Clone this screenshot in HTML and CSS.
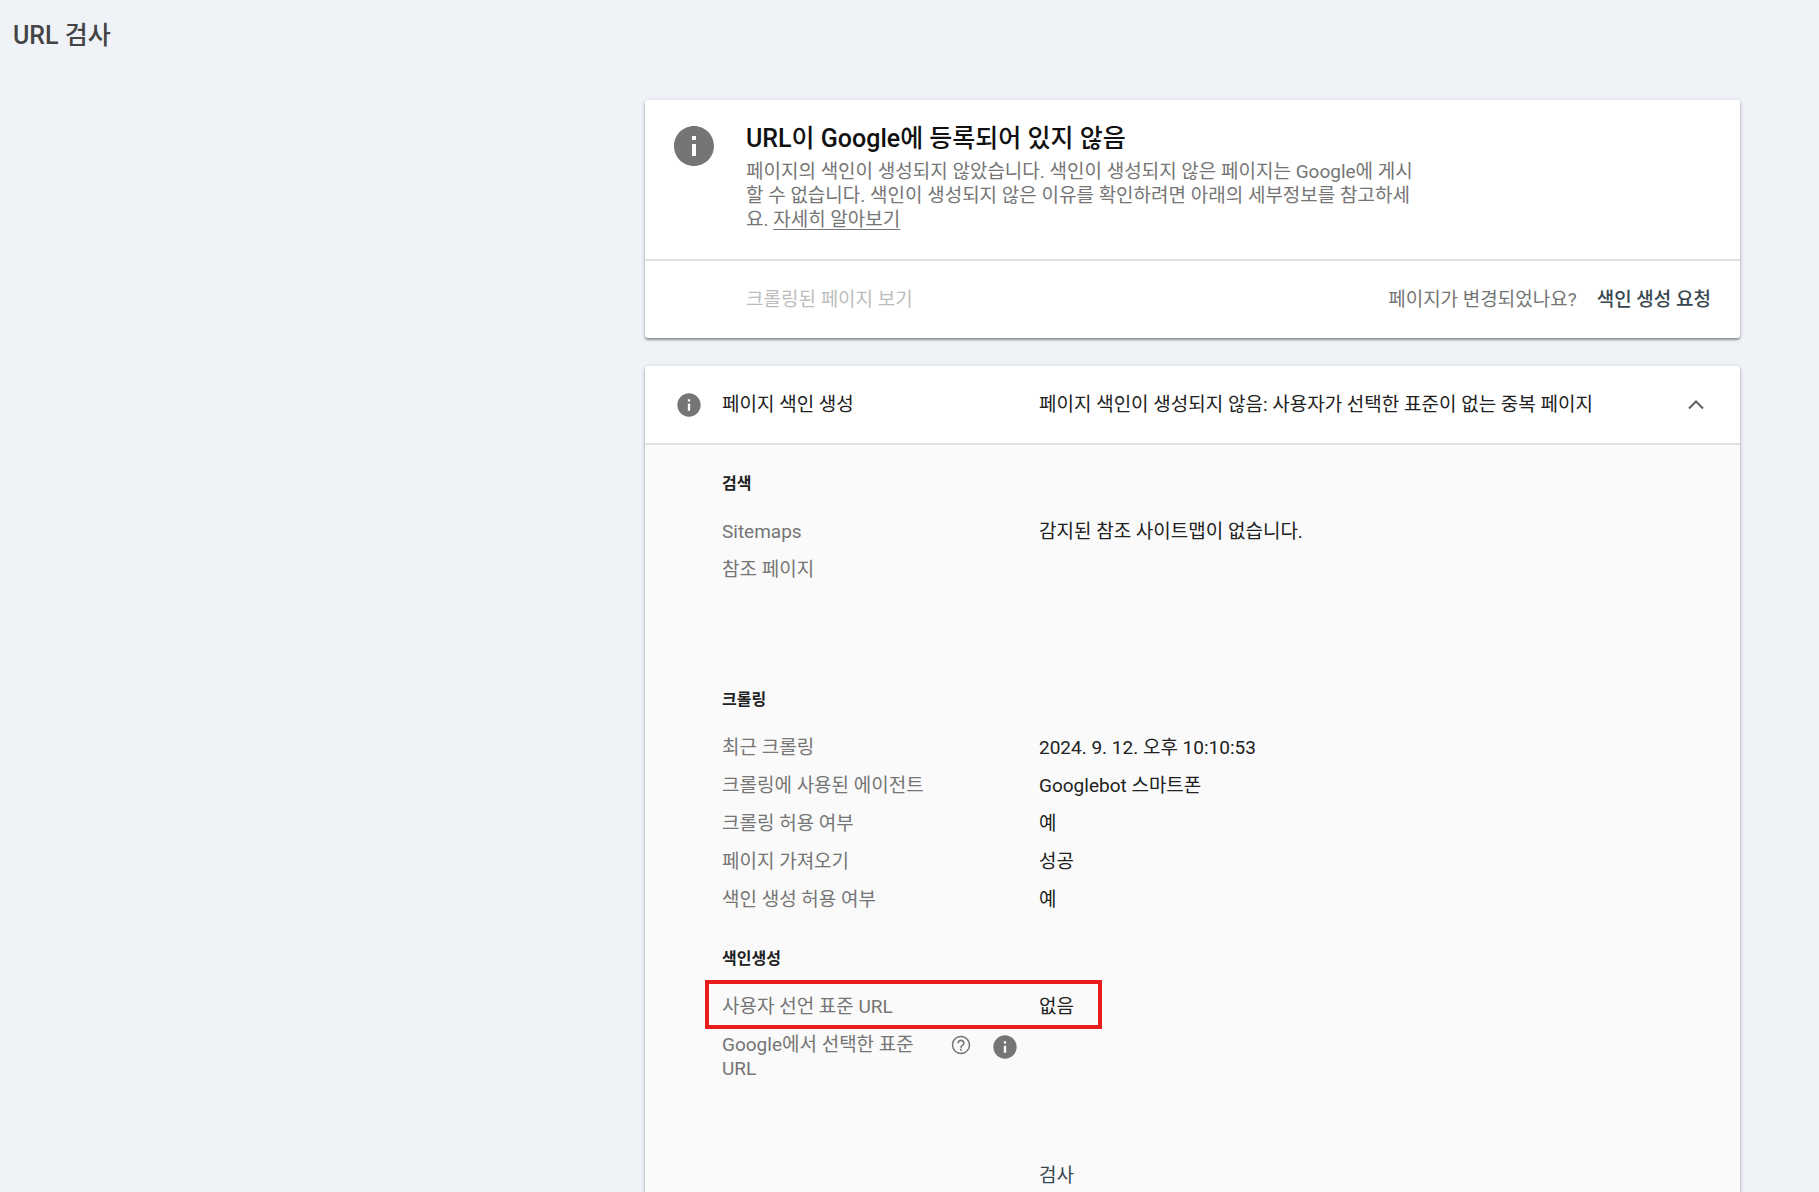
FILE: index.html
```html
<!DOCTYPE html>
<html lang="ko">
<head>
    <meta charset="UTF-8">
    <meta name="viewport" content="width=device-width, initial-scale=1.0">
    <title>URL 검사</title>
    <link rel="stylesheet" href="styles.css">
</head>
<body>
    <header class="page-header">
        <h1>URL 검사</h1>
    </header>

    <main class="content">
        <section class="card">
            <div class="summary">
                <svg class="icon-large" viewBox="0 0 24 24" aria-hidden="true">
                    <path d="M12 2C6.48 2 2 6.48 2 12s4.48 10 10 10 10-4.48 10-10S17.52 2 12 2zm1 15h-2v-6h2v6zm0-8h-2V7h2v2z"/>
                </svg>
                <div class="summary-text">
                    <h2>URL이 Google에 등록되어 있지 않음</h2>
                    <p>페이지의 색인이 생성되지 않았습니다. 색인이 생성되지 않은 페이지는 Google에 게시할 수 없습니다. 색인이 생성되지 않은 이유를 확인하려면 아래의 세부정보를 참고하세요. <a href="#">자세히 알아보기</a></p>
                </div>
            </div>
            <div class="actions">
                <button type="button" class="view-page" disabled>크롤링된 페이지 보기</button>
                <span class="changed">페이지가 변경되었나요?</span>
                <button type="button" class="request">색인 생성 요청</button>
            </div>
        </section>

        <section class="card details">
            <button type="button" class="details-header" aria-expanded="true">
                <svg class="icon-info" viewBox="0 0 24 24" aria-hidden="true">
                    <path d="M12 2C6.48 2 2 6.48 2 12s4.48 10 10 10 10-4.48 10-10S17.52 2 12 2zm1 15h-2v-6h2v6zm0-8h-2V7h2v2z"/>
                </svg>
                <span class="details-name">페이지 색인 생성</span>
                <span class="details-status">페이지 색인이 생성되지 않음: 사용자가 선택한 표준이 없는 중복 페이지</span>
                <svg class="chevron" viewBox="0 0 24 24" aria-hidden="true">
                    <path d="M5 15.5l7-7 7 7"/>
                </svg>
            </button>

            <div class="details-body">
                <div class="group group-search">
                    <h3>검색</h3>
                    <dl>
                        <div class="row">
                            <dt>Sitemaps</dt>
                            <dd>감지된 참조 사이트맵이 없습니다.</dd>
                        </div>
                        <div class="row">
                            <dt>참조 페이지</dt>
                            <dd></dd>
                        </div>
                    </dl>
                </div>

                <div class="group">
                    <h3>크롤링</h3>
                    <dl>
                        <div class="row">
                            <dt>최근 크롤링</dt>
                            <dd>2024. 9. 12. 오후 10:10:53</dd>
                        </div>
                        <div class="row">
                            <dt>크롤링에 사용된 에이전트</dt>
                            <dd>Googlebot 스마트폰</dd>
                        </div>
                        <div class="row">
                            <dt>크롤링 허용 여부</dt>
                            <dd>예</dd>
                        </div>
                        <div class="row">
                            <dt>페이지 가져오기</dt>
                            <dd>성공</dd>
                        </div>
                        <div class="row">
                            <dt>색인 생성 허용 여부</dt>
                            <dd>예</dd>
                        </div>
                    </dl>
                </div>

                <div class="group">
                    <h3>색인생성</h3>
                    <dl>
                        <div class="row highlighted">
                            <dt>사용자 선언 표준 URL</dt>
                            <dd>없음</dd>
                        </div>
                        <div class="row">
                            <dt>
                                <span class="label-text">Google에서 선택한 표준 URL</span>
                                <svg class="icon-help" viewBox="0 0 24 24" aria-hidden="true">
                                    <path d="M11 18h2v-2h-2v2zm1-16C6.48 2 2 6.48 2 12s4.48 10 10 10 10-4.48 10-10S17.52 2 12 2zm0 18.4c-4.63 0-8.4-3.77-8.4-8.4s3.77-8.4 8.4-8.4 8.4 3.77 8.4 8.4-3.77 8.4-8.4 8.4zM12 6c-2.21 0-4 1.79-4 4h1.8c0-1.2 1-2.2 2.2-2.2s2.2 1 2.2 2.2c0 2-3.1 1.8-3.1 5h1.8c0-2.3 3.1-2.5 3.1-5 0-2.21-1.79-4-4-4z"/>
                                </svg>
                                <svg class="icon-info" viewBox="0 0 24 24" aria-hidden="true">
                                    <path d="M12 2C6.48 2 2 6.48 2 12s4.48 10 10 10 10-4.48 10-10S17.52 2 12 2zm1 15h-2v-6h2v6zm0-8h-2V7h2v2z"/>
                                </svg>
                            </dt>
                            <dd></dd>
                        </div>
                    </dl>
                    <div class="inspect-row">
                        <button type="button" class="inspect">검사</button>
                    </div>
                </div>
            </div>
        </section>
    </main>
</body>
</html>
```
FILE: styles.css
```css
* {
    box-sizing: border-box;
}

body {
    display: flex;
    flex-direction: column;
    min-height: 100vh;
    margin: 0;
    background: #eff3f8;
    color: #212121;
    font-family: Roboto, "Noto Sans CJK KR", sans-serif;
    font-size: 19px;
    line-height: 24px;
}

h1, h2, h3, p, dl, dd {
    margin: 0;
}

button {
    padding: 0;
    border: 0;
    background: none;
    color: inherit;
    font: inherit;
    text-align: left;
    cursor: pointer;
}

svg {
    flex: none;
    fill: #757575;
}

.page-header {
    padding: 20px 13px 16px;
}

.page-header h1 {
    color: #444;
    font-size: 25px;
    font-weight: 500;
    line-height: 32px;
}

.content {
    display: flex;
    flex: 1;
    flex-direction: column;
    gap: 28px;
    margin: 32px 79px 0 645px;
}

.card {
    background: #fff;
    border-radius: 3px;
    box-shadow: 0 1px 4px rgba(0, 0, 0, 0.2), 0 2px 2px rgba(0, 0, 0, 0.3);
}

.summary {
    display: flex;
    gap: 28px;
    padding: 22px 25px 27px;
    border-bottom: 2px solid #e0e0e0;
}

.icon-large {
    width: 48px;
    height: 48px;
}

.summary-text h2 {
    color: #111;
    font-size: 25px;
    font-weight: 500;
    line-height: 34px;
}

.summary-text p {
    max-width: 680px;
    margin-top: 4px;
    color: #757575;
}

.summary-text a {
    color: inherit;
    text-underline-offset: 3px;
}

.actions {
    display: flex;
    align-items: center;
    padding: 27px 29px 26px 101px;
}

.view-page {
    margin-right: auto;
    color: #bdbdbd;
    cursor: default;
}

.changed {
    margin-right: 20px;
    color: #757575;
}

.request {
    color: #37474f;
    font-weight: 500;
}

.details {
    display: flex;
    flex: 1;
    flex-direction: column;
    border-radius: 3px 3px 0 0;
}

.details-header {
    display: flex;
    align-items: center;
    width: 100%;
    padding: 25px 32px 24px 30px;
    border-bottom: 2px solid #e0e0e0;
}

.details-header .icon-info {
    margin-right: 19px;
}

.details-name {
    width: 317px;
}

.details-status {
    flex: 1;
}

.icon-info {
    width: 28px;
    height: 28px;
}

.chevron {
    width: 24px;
    height: 24px;
    fill: none;
    stroke: #616161;
    stroke-width: 2;
}

.details-body {
    flex: 1;
    padding: 27px 32px 0 77px;
    background: #fafafa;
}

.group {
    margin-bottom: 28px;
}

.group-search {
    margin-bottom: 99px;
}

.group:last-child {
    margin-bottom: 0;
}

.group h3 {
    margin-bottom: 17px;
    font-size: 16px;
    font-weight: 700;
    line-height: 24px;
}

.row {
    display: grid;
    grid-template-columns: 317px 1fr;
    position: relative;
    padding: 7px 0;
}

.row dt {
    display: flex;
    color: #757575;
}

/* red frame around the row */
.highlighted::after {
    content: "";
    position: absolute;
    box-sizing: border-box;
    top: -8px;
    bottom: -3px;
    left: -17px;
    width: 397px;
    border: 4px solid #e91c1c;
}

.label-text {
    flex: 1;
}

.icon-help {
    width: 22px;
    height: 24px;
    margin: 0 19px 0 26px;
}

.row .icon-info {
    margin-right: 20px;
}

.inspect-row {
    padding: 76px 0 0 317px;
}

.inspect {
    color: #37474f;
}
```
